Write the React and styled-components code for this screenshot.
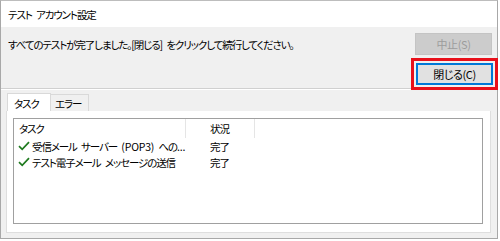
import React from "react";
import styled, { createGlobalStyle } from "styled-components";

const GlobalStyle = createGlobalStyle`
	html, body {
		margin: 0;
		padding: 0;
		background: #ffffff;
	}
	body {
		font-family: "Noto Sans CJK JP", "Noto Sans", sans-serif;
		font-size: 10.5px;
		letter-spacing: -1.1px;
		word-spacing: 3px;
		font-feature-settings: "palt";
		color: #000000;
	}
`;

const CheckIcon = () => (
	<CheckSvg width="12" height="10" viewBox="0 0 12 10">
		<path d="M1 5.2 L4.2 8.4 L11 1.2" fill="none" stroke="#1f7a1f" strokeWidth="1.7" />
	</CheckSvg>
);

const App = () => {
	return (
		<>
			<GlobalStyle />
			<Window>
				<TitleBar>テスト アカウント設定</TitleBar>
				<Body>
					<TopRow>
						<Message>
							すべてのテストが完了しました。[閉じる] をクリックして続行してください。
						</Message>
						<Button disabled>中止(S)</Button>
					</TopRow>
					<CloseRow>
						<Highlight>
							<Button primary>閉じる(C)</Button>
						</Highlight>
					</CloseRow>
					<Separator />
					<Tabs>
						<Tab active>タスク</Tab>
						<Tab>エラー</Tab>
					</Tabs>
					<Panel>
						<List>
							<HeaderRow>
								<TaskCell header>タスク</TaskCell>
								<StatusCell header>状況</StatusCell>
							</HeaderRow>
							<Row>
								<TaskCell>
									<CheckIcon />
									受信メール サーバー <Latin>(POP3)</Latin> への<Latin>...</Latin>
								</TaskCell>
								<StatusCell>完了</StatusCell>
							</Row>
							<Row>
								<TaskCell>
									<CheckIcon />
									テスト電子メール メッセージの送信
								</TaskCell>
								<StatusCell>完了</StatusCell>
							</Row>
						</List>
					</Panel>
				</Body>
			</Window>
		</>
	);
};

const Window = styled.div`
	width: 496px;
	height: 237px;
	border: 1px solid #a8a8a8;
	border-top-color: #bdbdbd;
	background: #f0f0f0;
	display: flex;
	flex-direction: column;
`;
const TitleBar = styled.div`
	height: 26px;
	background: #ffffff;
	display: flex;
	align-items: center;
	padding-left: 7px;
	flex-shrink: 0;
	white-space: pre;
`;
const Body = styled.div`
	flex: 1;
	display: flex;
	flex-direction: column;
	padding: 6px 6px 5px 5px;
	min-height: 0;
`;
const TopRow = styled.div`
	display: flex;
	align-items: center;
	justify-content: space-between;
	padding-left: 2px;
	height: 22px;
	margin-right: -1px;
`;
const Message = styled.div`
	white-space: nowrap;
`;
const Button = styled.button`
	width: 77px;
	height: 22px;
	font: inherit;
	font-size: 11px;
	letter-spacing: -0.4px;
	font-feature-settings: "palt";
	display: flex;
	align-items: center;
	justify-content: center;
	padding: 0;
	background: ${(p) => (p.disabled ? "#cccccc" : "#e1e1e1")};
	color: ${(p) => (p.disabled ? "#9c9c9c" : "#000000")};
	border: ${(p) => (p.primary ? "2px solid #0078d7" : "1px solid #c4c4c4")};
`;
const CloseRow = styled.div`
	display: flex;
	justify-content: flex-end;
	margin-top: 3px;
	margin-right: -7px;
	position: relative;
	z-index: 1;
`;
const Highlight = styled.div`
	border: 3px solid #e8101a;
	padding: 2px;
	display: flex;
`;
const Separator = styled.div`
	height: 1px;
	background: #d0d0d0;
	border-bottom: 1px solid #ffffff;
	margin: -2px -6px 0 -5px;
`;
const Tabs = styled.div`
	display: flex;
	align-items: flex-end;
	margin-top: 3px;
	padding-left: 1px;
	height: 18px;
`;
const Tab = styled.div`
	height: ${(p) => (p.active ? "18px" : "17px")};
	width: ${(p) => (p.active ? "44px" : "38px")};
	background: ${(p) => (p.active ? "#ffffff" : "#f0f0f0")};
	border: 1px solid #d9d9d9;
	border-bottom: none;
	border-left: ${(p) => (p.active ? "1px solid #d9d9d9" : "none")};
	box-sizing: border-box;
	display: flex;
	align-items: center;
	padding-left: ${(p) => (p.active ? "6px" : "4px")};
	padding-top: 1px;
	white-space: nowrap;
`;
const Panel = styled.div`
	flex: 1;
	background: #ffffff;
	border: 1px solid #dedede;
	border-top: none;
	padding: 7px 7px 8px 6px;
	display: flex;
	min-height: 0;
`;
const List = styled.div`
	flex: 1;
	border: 1px solid #a0a0a0;
	background: #ffffff;
	padding: 0 0 0 3px;
`;
const HeaderRow = styled.div`
	display: flex;
	height: 19px;
	align-items: center;
`;
const Row = styled.div`
	display: flex;
	height: 16px;
	align-items: center;
`;
const TaskCell = styled.div`
	box-sizing: border-box;
	width: 169px;
	padding-left: ${(p) => (p.header ? "2px" : "0")};
	height: 100%;
	display: flex;
	align-items: center;
	border-right: 1px solid ${(p) => (p.header ? "#e5e5e5" : "transparent")};
	white-space: pre;
`;
const StatusCell = styled.div`
	box-sizing: border-box;
	width: 69px;
	padding-left: 24px;
	height: 100%;
	display: flex;
	align-items: center;
	border-right: 1px solid ${(p) => (p.header ? "#e5e5e5" : "transparent")};
	white-space: nowrap;
`;
const Latin = styled.span`
	letter-spacing: -0.2px;
`;
const CheckSvg = styled.svg`
	flex-shrink: 0;
	margin: 0 2px 0 1px;
`;

export default App;
